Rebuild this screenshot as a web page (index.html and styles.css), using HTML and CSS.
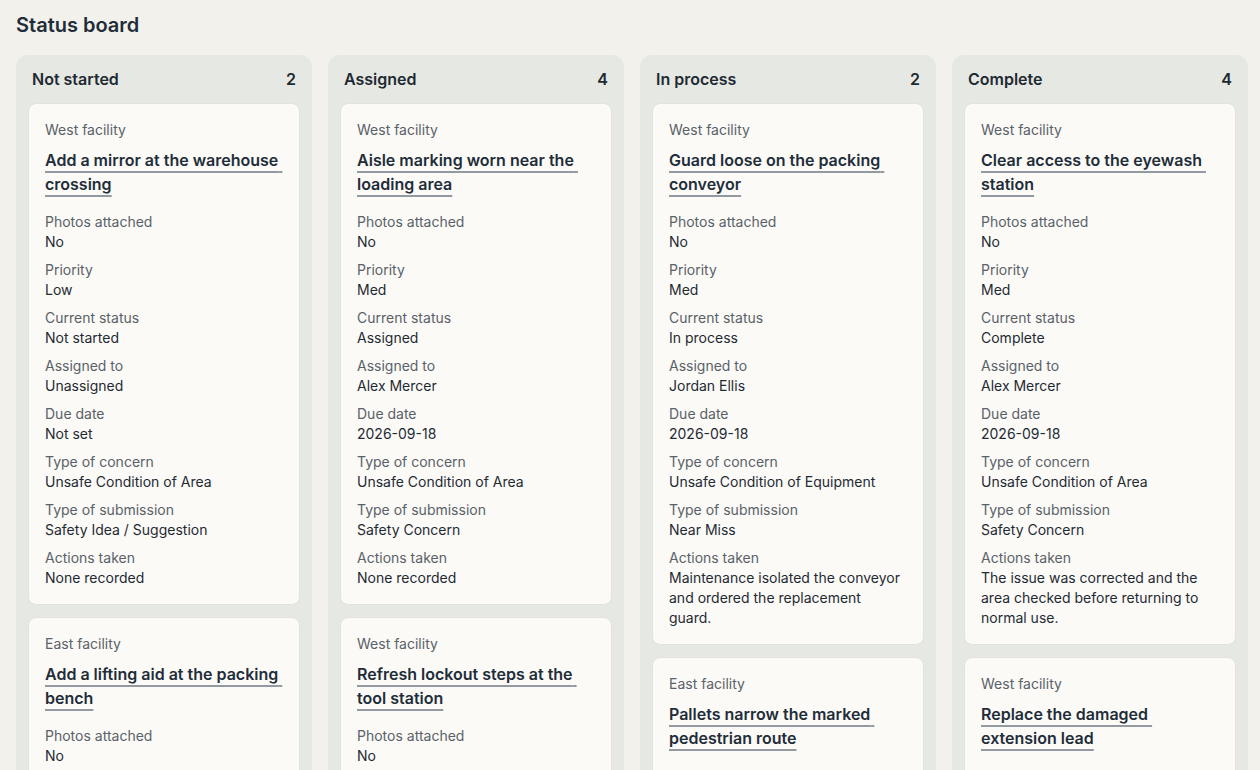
FILE: index.html
```html
<!DOCTYPE html>
<html lang="en">
<head>
    <meta charset="UTF-8">
    <meta name="viewport" content="width=device-width, initial-scale=1.0">
    <title>Status board</title>
    <link rel="stylesheet" href="styles.css">
</head>
<body>
    <h1 class="page-title">Status board</h1>

    <div class="board">
        <!-- Not started -->
        <section class="column">
            <div class="column-header">
                <h2>Not started</h2>
                <span class="count">2</span>
            </div>
            <article class="card">
                <div class="site">West facility</div>
                <h3 class="card-title"><a href="#">Add a mirror at the warehouse crossing</a></h3>
                <dl class="fields">
                    <div><dt>Photos attached</dt><dd>No</dd></div>
                    <div><dt>Priority</dt><dd>Low</dd></div>
                    <div><dt>Current status</dt><dd>Not started</dd></div>
                    <div><dt>Assigned to</dt><dd>Unassigned</dd></div>
                    <div><dt>Due date</dt><dd>Not set</dd></div>
                    <div><dt>Type of concern</dt><dd>Unsafe Condition of Area</dd></div>
                    <div><dt>Type of submission</dt><dd>Safety Idea / Suggestion</dd></div>
                    <div><dt>Actions taken</dt><dd>None recorded</dd></div>
                </dl>
            </article>
            <article class="card">
                <div class="site">East facility</div>
                <h3 class="card-title"><a href="#">Add a lifting aid at the packing bench</a></h3>
                <dl class="fields">
                    <div><dt>Photos attached</dt><dd>No</dd></div>
                    <div><dt>Priority</dt><dd>Low</dd></div>
                </dl>
            </article>
        </section>

        <!-- Assigned -->
        <section class="column">
            <div class="column-header">
                <h2>Assigned</h2>
                <span class="count">4</span>
            </div>
            <article class="card">
                <div class="site">West facility</div>
                <h3 class="card-title"><a href="#">Aisle marking worn near the loading area</a></h3>
                <dl class="fields">
                    <div><dt>Photos attached</dt><dd>No</dd></div>
                    <div><dt>Priority</dt><dd>Med</dd></div>
                    <div><dt>Current status</dt><dd>Assigned</dd></div>
                    <div><dt>Assigned to</dt><dd>Alex Mercer</dd></div>
                    <div><dt>Due date</dt><dd>2026-09-18</dd></div>
                    <div><dt>Type of concern</dt><dd>Unsafe Condition of Area</dd></div>
                    <div><dt>Type of submission</dt><dd>Safety Concern</dd></div>
                    <div><dt>Actions taken</dt><dd>None recorded</dd></div>
                </dl>
            </article>
            <article class="card">
                <div class="site">West facility</div>
                <h3 class="card-title"><a href="#">Refresh lockout steps at the tool station</a></h3>
                <dl class="fields">
                    <div><dt>Photos attached</dt><dd>No</dd></div>
                    <div><dt>Priority</dt><dd>Med</dd></div>
                </dl>
            </article>
        </section>

        <!-- In process -->
        <section class="column">
            <div class="column-header">
                <h2>In process</h2>
                <span class="count">2</span>
            </div>
            <article class="card">
                <div class="site">West facility</div>
                <h3 class="card-title"><a href="#">Guard loose on the packing conveyor</a></h3>
                <dl class="fields">
                    <div><dt>Photos attached</dt><dd>No</dd></div>
                    <div><dt>Priority</dt><dd>Med</dd></div>
                    <div><dt>Current status</dt><dd>In process</dd></div>
                    <div><dt>Assigned to</dt><dd>Jordan Ellis</dd></div>
                    <div><dt>Due date</dt><dd>2026-09-18</dd></div>
                    <div><dt>Type of concern</dt><dd>Unsafe Condition of Equipment</dd></div>
                    <div><dt>Type of submission</dt><dd>Near Miss</dd></div>
                    <div><dt>Actions taken</dt><dd>Maintenance isolated the conveyor and ordered the replacement guard.</dd></div>
                </dl>
            </article>
            <article class="card">
                <div class="site">East facility</div>
                <h3 class="card-title"><a href="#">Pallets narrow the marked pedestrian route</a></h3>
                <dl class="fields">
                    <div><dt>Photos attached</dt><dd>No</dd></div>
                    <div><dt>Priority</dt><dd>Med</dd></div>
                </dl>
            </article>
        </section>

        <!-- Complete -->
        <section class="column">
            <div class="column-header">
                <h2>Complete</h2>
                <span class="count">4</span>
            </div>
            <article class="card">
                <div class="site">West facility</div>
                <h3 class="card-title"><a href="#">Clear access to the eyewash station</a></h3>
                <dl class="fields">
                    <div><dt>Photos attached</dt><dd>No</dd></div>
                    <div><dt>Priority</dt><dd>Med</dd></div>
                    <div><dt>Current status</dt><dd>Complete</dd></div>
                    <div><dt>Assigned to</dt><dd>Alex Mercer</dd></div>
                    <div><dt>Due date</dt><dd>2026-09-18</dd></div>
                    <div><dt>Type of concern</dt><dd>Unsafe Condition of Area</dd></div>
                    <div><dt>Type of submission</dt><dd>Safety Concern</dd></div>
                    <div><dt>Actions taken</dt><dd>The issue was corrected and the area checked before returning to normal use.</dd></div>
                </dl>
            </article>
            <article class="card">
                <div class="site">West facility</div>
                <h3 class="card-title"><a href="#">Replace the damaged extension lead</a></h3>
                <dl class="fields">
                    <div><dt>Photos attached</dt><dd>No</dd></div>
                    <div><dt>Priority</dt><dd>Med</dd></div>
                </dl>
            </article>
        </section>
    </div>
</body>
</html>
```

FILE: styles.css
```css
* {
    margin: 0;
    padding: 0;
    box-sizing: border-box;
}

body {
    font-family: Inter, 'Noto Sans', sans-serif;
    background: #f3f1eb;
    color: #1f2a33;
    padding: 12px 12px 0 16px;
    height: 100vh;
    overflow: hidden;
}

.page-title {
    font-size: 20px;
    font-weight: 600;
    line-height: 26px;
    color: #1f2d3a;
    margin-bottom: 17px;
}

.board {
    display: grid;
    grid-template-columns: repeat(4, 296px);
    gap: 16px;
    align-items: start;
}

.column {
    background: #e6e8e3;
    border-radius: 12px;
    padding: 12px;
    display: flex;
    flex-direction: column;
    gap: 12px;
}

.column-header {
    display: flex;
    justify-content: space-between;
    align-items: center;
    padding: 0 4px;
    line-height: 24px;
}

.column-header h2 {
    font-size: 16px;
    font-weight: 600;
}

.count {
    font-size: 16px;
    font-weight: 600;
}

.card {
    background: #fbfaf7;
    border: 1px solid #e2e3dd;
    border-radius: 8px;
    padding: 16px;
}

.site {
    font-size: 14px;
    line-height: 20px;
    color: #5a6168;
    margin-bottom: 8px;
}

.card-title {
    font-size: 16px;
    font-weight: 600;
    line-height: 24px;
    margin-bottom: 16px;
}

.card-title a {
    color: #1f2d3a;
    white-space: pre-wrap;
    text-decoration: underline;
    text-decoration-color: #9299a0;
    text-decoration-thickness: 2px;
    text-underline-offset: 5px;
}

.fields {
    display: flex;
    flex-direction: column;
    gap: 8px;
    font-size: 14px;
    line-height: 20px;
}

.fields dt {
    color: #5a6168;
}

.fields dd {
    color: #1f2a33;
}
```
